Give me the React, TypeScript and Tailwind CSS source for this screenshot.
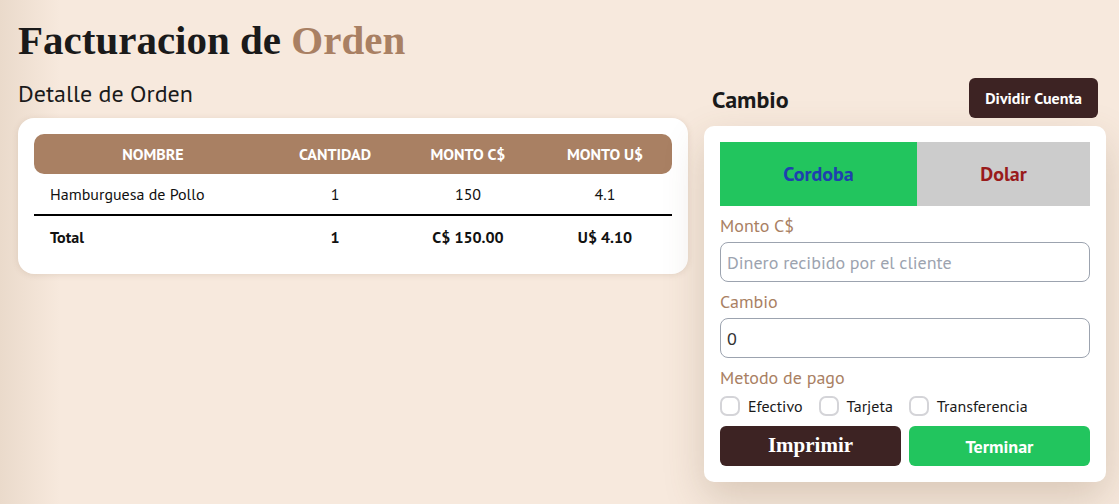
import React from "react";

const sans = "font-['PT_Sans','Lato','Noto_Sans',sans-serif]";

export default function App() {
  const rows = [{ n: "Hamburguesa de Pollo", q: "1", c: "150", u: "4.1" }];
  return (
    <div className={`min-h-[504px] w-full bg-[linear-gradient(to_right,#eadacb,#f7e9dd_60px)] ${sans} text-[#111]`}>
      <div className="pl-[18px] pt-[16px]">
        <h1 className="font-['Liberation_Serif',serif] text-[41px] leading-[48px] font-bold text-[#1a1a1a]">
          Facturacion de <span className="text-[#a98063]">Orden</span>
        </h1>
        <div className="mt-[12px] flex gap-[16px]">
          {/* Left */}
          <div className="w-[670px]">
            <div className="text-[24px] leading-[32px] text-[#1a1a1a] pt-[2px]">Detalle de Orden</div>
            <div className="mt-[8px] rounded-[16px] bg-white p-[16px] shadow-[0_1px_6px_rgba(120,90,60,0.15)]">
              <div className="grid grid-cols-[238px_126px_140px_134px] h-[40px] items-center rounded-[10px] bg-[#a98063] text-[16px] font-bold text-white uppercase">
                <div className="text-center">Nombre</div>
                <div className="text-center">Cantidad</div>
                <div className="text-center">Monto C$</div>
                <div className="text-center">Monto U$</div>
              </div>
              {rows.map((r) => (
                <div key={r.n} className="grid grid-cols-[238px_126px_140px_134px] h-[42px] items-center text-[16px] border-b-2 border-black">
                  <div className="pl-[16px]">{r.n}</div>
                  <div className="text-center">{r.q}</div>
                  <div className="text-center">{r.c}</div>
                  <div className="text-center">{r.u}</div>
                </div>
              ))}
              <div className="grid grid-cols-[238px_126px_140px_134px] h-[42px] items-center text-[16px] font-bold">
                <div className="pl-[16px]">Total</div>
                <div className="text-center">1</div>
                <div className="text-center">C$ 150.00</div>
                <div className="text-center">U$ 4.10</div>
              </div>
            </div>
          </div>
          {/* Right */}
          <div className="w-[402px]">
            <div className="flex items-end justify-between px-[8px] pt-[2px]">
              <div className="text-[24px] leading-[32px] font-bold text-[#1a1a1a] pb-[2px]">Cambio</div>
              <button className="h-[40px] rounded-[6px] bg-[#3d2323] px-[16px] text-[16px] font-bold text-white">Dividir Cuenta</button>
            </div>
            <div className="mt-[8px] rounded-[10px] bg-white p-[16px] shadow-[0_16px_40px_rgba(110,80,50,0.22)]">
              <div className="flex h-[64px] text-[20px] font-semibold">
                <div className="flex w-[197px] items-center justify-center bg-[#22c55e] text-[#1e40af]">Cordoba</div>
                <div className="flex flex-1 items-center justify-center bg-[#cccccc] text-[#991b1b]">Dolar</div>
              </div>
              <div className="mt-[6px] text-[18px] leading-[28px] text-[#a98063]">Monto C$</div>
              <input
                className="mt-[2px] h-[40px] w-full rounded-[8px] border border-[#9ca3af] px-[6px] text-[18px] placeholder:text-[#9ca3af] outline-none"
                placeholder="Dinero recibido por el cliente"
              />
              <div className="mt-[6px] text-[18px] leading-[28px] text-[#a98063]">Cambio</div>
              <input
                className="mt-[2px] h-[40px] w-full rounded-[8px] border border-[#9ca3af] px-[6px] text-[18px] text-[#333] outline-none"
                defaultValue="0"
              />
              <div className="mt-[6px] text-[18px] leading-[28px] text-[#a98063]">Metodo de pago</div>
              <div className="mt-[2px] flex h-[24px] items-center gap-[16px] text-[16px] text-[#1a1a1a]">
                {["Efectivo", "Tarjeta", "Transferencia"].map((l) => (
                  <label key={l} className="flex items-center gap-[8px]">
                    <span className="inline-block h-[20px] w-[20px] rounded-[7px] border-2 border-[#d4d4d8] bg-white" />
                    {l}
                  </label>
                ))}
              </div>
              <div className="mt-[8px] flex gap-[8px]">
                <button className="h-[40px] flex-1 rounded-[6px] bg-[#3d2323] font-['Liberation_Serif',serif] text-[21px] font-bold text-white">Imprimir</button>
                <button className="h-[40px] flex-1 rounded-[6px] bg-[#22c55e] text-[18px] font-bold text-white">Terminar</button>
              </div>
            </div>
          </div>
        </div>
      </div>
    </div>
  );
}
